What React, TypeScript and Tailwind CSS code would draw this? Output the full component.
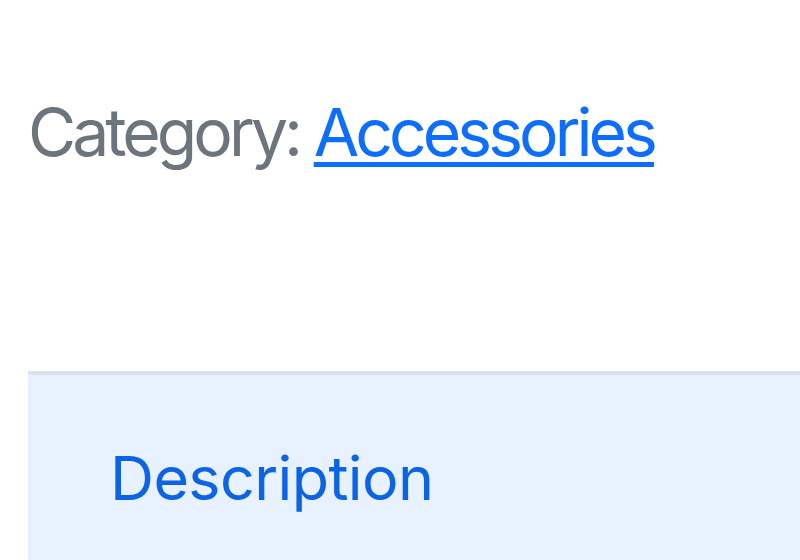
export default function App() {
  return (
    <div className="w-[800px] h-[560px] overflow-hidden bg-white pl-[28px] pt-[99px] font-['Inter','Liberation_Sans',sans-serif]">
      <p className="text-[66px] leading-none tracking-[-0.06em] text-[#6c757d] whitespace-nowrap">
        Category:{" "}
        <a href="#" className="text-[#0d6efd] underline decoration-[5px] underline-offset-[6px]">
          Accessories
        </a>
      </p>

      <div className="mt-[206px] h-[300px] border-t-4 border-[#dee2e6] bg-[#e7f1ff]">
        <button className="pl-[82px] pt-[73px] text-[61px] leading-none tracking-[-0.01em] text-[#0c63e4]">
          Description
        </button>
      </div>
    </div>
  );
}
